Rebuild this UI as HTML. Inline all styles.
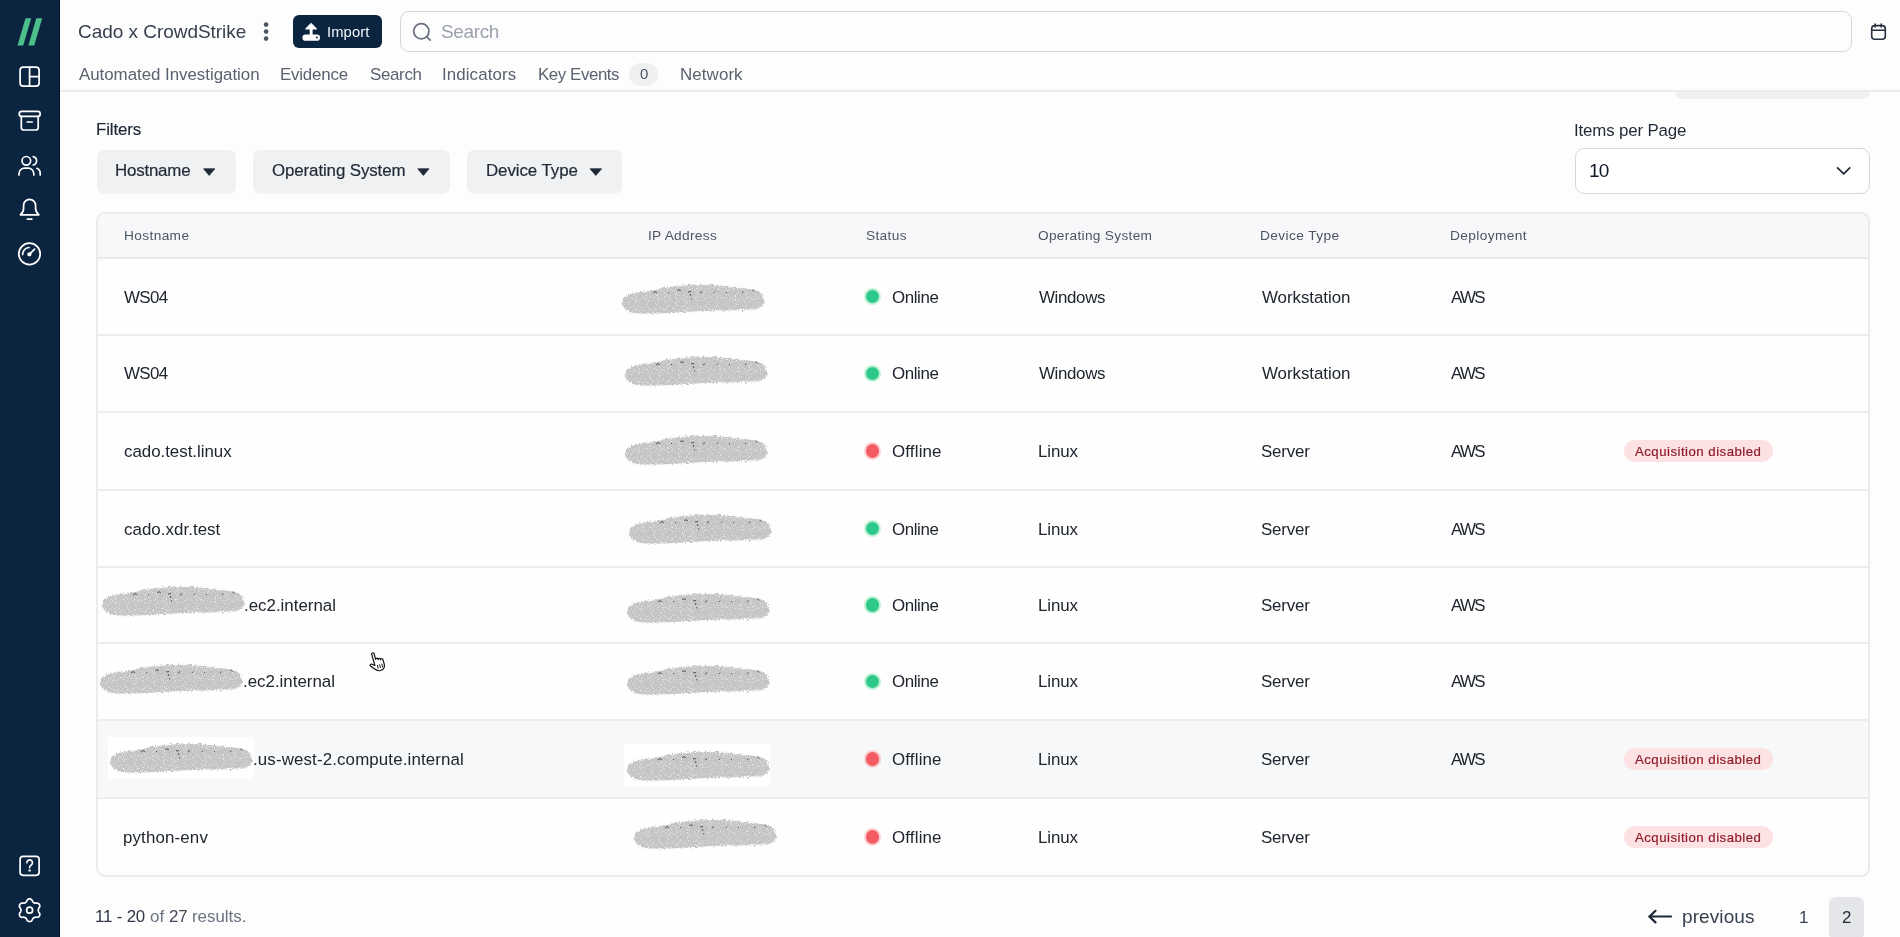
<!DOCTYPE html>
<html><head><meta charset="utf-8"><title>Cado</title>
<style>
html,body{margin:0;padding:0;}
body{width:1900px;height:937px;overflow:hidden;position:relative;background:#fdfdfd;font-family:"Liberation Sans",sans-serif;}
.t{position:absolute;white-space:pre;will-change:transform;}
.r{position:absolute;box-sizing:border-box;}
svg{position:absolute;overflow:visible;}
</style></head><body>

<div class="r" style="left:0px;top:0px;width:60px;height:937px;background:#0b2541;"></div>
<div class="r" style="left:59px;top:0px;width:1px;height:937px;background:#041529;"></div>
<svg style="left:0;top:0" width="61" height="60" viewBox="0 0 61 60"><path d="M25.5 18.3 L31.2 18.3 L23.2 45.5 L17.5 45.5 Z" fill="#4cbf8b"/><path d="M36.3 18.3 L42.2 18.3 L34.2 45.5 L28.4 45.5 Z" fill="#4cbf8b"/></svg>
<svg style="left:0;top:0" width="61" height="300"><g fill="none" stroke="#ffffff" stroke-width="1.7" stroke-linecap="round" stroke-linejoin="round"><rect x="20.1" y="67.1" width="19" height="19" rx="3.2"/><line x1="29.6" y1="67.1" x2="29.6" y2="86.1"/><line x1="29.6" y1="76.6" x2="39.1" y2="76.6"/><rect x="19.2" y="111.4" width="21" height="5.0" rx="2.5"/><path d="M21.3 116.4 V127.4 a2.6 2.6 0 0 0 2.6 2.6 H35.6 a2.6 2.6 0 0 0 2.6 -2.6 V116.4"/><line x1="27.2" y1="122" x2="32.2" y2="122"/><circle cx="26.3" cy="160.8" r="4.3"/><path d="M19 175 v-1.3 a5.6 5.6 0 0 1 5.6 -5.6 h3.6 a5.6 5.6 0 0 1 5.6 5.6 v1.3"/><path d="M33.2 156.6 a4.3 4.3 0 0 1 0 8.4"/><path d="M36.9 168.3 a5.6 5.6 0 0 1 3.3 5.2 v1.5"/><path d="M20.3 214.8 H38.9 C37 213.2 35.6 211.5 35.6 208.5 V205.4 a6 6 0 0 0 -12 0 V208.5 C23.6 211.5 22.2 213.2 20.3 214.8 Z"/><line x1="27.4" y1="219.2" x2="31.8" y2="219.2"/><circle cx="29.5" cy="253.9" r="10.7"/><path d="M22.6 254.6 A6.9 6.9 0 0 1 29.0 247.5"/><line x1="29.4" y1="254.3" x2="34.6" y2="249.1"/><circle cx="29.4" cy="254.3" r="1.3" fill="#ffffff"/></g></svg>
<svg style="left:0;top:840px" width="61" height="97"><g fill="none" stroke="#ffffff" stroke-width="1.7" stroke-linecap="round" stroke-linejoin="round"><rect x="20.1" y="16.3" width="19" height="19" rx="3"/><path d="M26.9 22.6 a2.8 2.8 0 1 1 4.3 2.4 c-1 .6 -1.6 1.1 -1.6 2.4"/><circle cx="29.6" cy="30.5" r="0.4" fill="#ffffff"/><path d="M29.60 58.85 L30.19 58.91 L30.77 59.10 L31.31 59.40 L31.80 59.84 L32.19 60.54 L32.51 61.25 L32.85 61.73 L33.19 62.13 L33.55 62.45 L33.92 62.71 L34.34 62.91 L34.79 63.05 L35.31 63.15 L35.89 63.21 L36.67 63.13 L37.47 63.11 L38.09 63.32 L38.63 63.64 L39.08 64.04 L39.43 64.53 L39.67 65.07 L39.80 65.66 L39.80 66.28 L39.67 66.93 L39.26 67.61 L38.80 68.24 L38.56 68.78 L38.39 69.28 L38.28 69.74 L38.25 70.20 L38.28 70.66 L38.39 71.12 L38.56 71.62 L38.80 72.16 L39.26 72.79 L39.67 73.47 L39.80 74.12 L39.80 74.74 L39.67 75.33 L39.43 75.88 L39.08 76.36 L38.63 76.76 L38.09 77.08 L37.47 77.29 L36.67 77.27 L35.89 77.19 L35.31 77.25 L34.79 77.35 L34.34 77.49 L33.92 77.69 L33.55 77.95 L33.19 78.27 L32.85 78.67 L32.51 79.15 L32.19 79.86 L31.80 80.56 L31.31 81.00 L30.77 81.30 L30.19 81.49 L29.60 81.55 L29.01 81.49 L28.43 81.30 L27.89 81.00 L27.40 80.56 L27.01 79.86 L26.69 79.15 L26.35 78.67 L26.01 78.27 L25.65 77.95 L25.28 77.69 L24.86 77.49 L24.41 77.35 L23.89 77.25 L23.31 77.19 L22.53 77.27 L21.73 77.29 L21.11 77.08 L20.57 76.76 L20.12 76.36 L19.77 75.88 L19.53 75.33 L19.40 74.74 L19.40 74.12 L19.53 73.47 L19.94 72.79 L20.40 72.16 L20.64 71.62 L20.81 71.12 L20.92 70.66 L20.95 70.20 L20.92 69.74 L20.81 69.28 L20.64 68.78 L20.40 68.24 L19.94 67.61 L19.53 66.93 L19.40 66.28 L19.40 65.66 L19.53 65.07 L19.77 64.53 L20.12 64.04 L20.57 63.64 L21.11 63.32 L21.73 63.11 L22.53 63.13 L23.31 63.21 L23.89 63.15 L24.41 63.05 L24.86 62.91 L25.28 62.71 L25.65 62.45 L26.01 62.13 L26.35 61.73 L26.69 61.25 L27.01 60.54 L27.40 59.84 L27.89 59.40 L28.43 59.10 L29.01 58.91 Z"/><circle cx="29.6" cy="70.2" r="3.0"/></g></svg>
<div class="r" style="left:60px;top:0px;width:1840px;height:91px;background:#fdfdfd;"></div>
<div class="r" style="left:60px;top:90px;width:1840px;height:2px;background:#ececef;"></div>
<div class="t" style="left:77.80px;top:20px;font-size:19.0px;line-height:24px;color:#384150;letter-spacing:-0.037px;">Cado x CrowdStrike</div>
<svg style="left:0;top:0" width="300" height="60"><g fill="#4b5563"><circle cx="266.1" cy="24.6" r="2.3"/><circle cx="266.1" cy="31.6" r="2.3"/><circle cx="266.1" cy="38.6" r="2.3"/></g></svg>
<div class="r" style="left:293px;top:15px;width:89px;height:33px;background:#0b2541;border-radius:6px;"></div>
<svg style="left:0;top:0" width="400" height="60"><path d="M311.1 23.6 L316.3 28.9 L305.9 28.9 Z" fill="#fff" stroke="#fff" stroke-width="1.3" stroke-linejoin="round"/><rect x="309.7" y="27.5" width="2.9" height="8.5" fill="#fff"/><rect x="302.4" y="34.6" width="17.6" height="6.2" rx="3.1" fill="#fff"/><circle cx="316.9" cy="37.5" r="0.95" fill="#0b2541"/></svg>
<div class="t" style="left:327.32px;top:20px;font-size:14.8px;line-height:24px;color:#f4f6f8;letter-spacing:0.085px;">Import</div>
<div class="r" style="left:400px;top:11px;width:1452px;height:41px;background:#fdfdfe;border:1.5px solid #d4d7dd;border-radius:9px;"></div>
<svg style="left:0;top:0" width="460" height="60"><g fill="none" stroke="#6b7280" stroke-width="1.8" stroke-linecap="round"><circle cx="421.3" cy="31.3" r="7.6"/><line x1="426.9" y1="36.9" x2="430.2" y2="40.2"/></g></svg>
<div class="t" style="left:441.23px;top:20px;font-size:19.0px;line-height:24px;color:#9aa1ac;letter-spacing:-0.365px;">Search</div>
<svg style="left:0;top:0" width="1900" height="60"><g fill="none" stroke="#263040" stroke-width="1.6" stroke-linecap="round" stroke-linejoin="round"><rect x="1871.7" y="25.6" width="13.6" height="13.6" rx="3"/><line x1="1871.7" y1="30.3" x2="1885.3" y2="30.3"/><line x1="1875.2" y1="24" x2="1875.2" y2="27"/><line x1="1881.2" y1="24" x2="1881.2" y2="27"/></g></svg>
<div class="t" style="left:78.80px;top:63px;font-size:16.9px;line-height:24px;color:#5a6270;letter-spacing:-0.031px;">Automated Investigation</div>
<div class="t" style="left:279.62px;top:63px;font-size:16.9px;line-height:24px;color:#5a6270;letter-spacing:-0.207px;">Evidence</div>
<div class="t" style="left:369.75px;top:63px;font-size:16.9px;line-height:24px;color:#5a6270;letter-spacing:-0.325px;">Search</div>
<div class="t" style="left:442.30px;top:63px;font-size:16.9px;line-height:24px;color:#5a6270;letter-spacing:0.097px;">Indicators</div>
<div class="t" style="left:537.62px;top:63px;font-size:16.9px;line-height:24px;color:#5a6270;letter-spacing:-0.431px;">Key Events</div>
<div class="r" style="left:628.8px;top:62.5px;width:29.700000000000045px;height:23.0px;background:#eff0f2;border-radius:11.5px;"></div>
<div class="t" style="left:639.77px;top:62px;font-size:15.0px;line-height:24px;color:#4b5563;">0</div>
<div class="t" style="left:680.33px;top:63px;font-size:16.9px;line-height:24px;color:#5a6270;letter-spacing:0.100px;">Network</div>
<div class="r" style="left:1675px;top:92px;width:195px;height:7px;background:#eff0f2;border-radius:0 0 8px 8px;"></div>
<div class="t" style="left:95.72px;top:118px;font-size:16.9px;line-height:24px;color:#1f2937;letter-spacing:-0.117px;-webkit-text-stroke:0.2px #1f2937;">Filters</div>
<div class="r" style="left:96.5px;top:149.5px;width:139.0px;height:43.5px;background:#f0f1f3;border-radius:7px;box-shadow:0 1px 1px rgba(0,0,0,0.03);"></div>
<div class="r" style="left:252.5px;top:149.5px;width:197.0px;height:43.5px;background:#f0f1f3;border-radius:7px;box-shadow:0 1px 1px rgba(0,0,0,0.03);"></div>
<div class="r" style="left:467px;top:149.5px;width:154.79999999999995px;height:43.5px;background:#f0f1f3;border-radius:7px;box-shadow:0 1px 1px rgba(0,0,0,0.03);"></div>
<div class="t" style="left:114.62px;top:159px;font-size:16.9px;line-height:24px;color:#1f2937;letter-spacing:-0.207px;-webkit-text-stroke:0.2px #1f2937;">Hostname</div>
<div class="t" style="left:271.65px;top:159px;font-size:16.9px;line-height:24px;color:#1f2937;letter-spacing:-0.110px;-webkit-text-stroke:0.2px #1f2937;">Operating System</div>
<div class="t" style="left:485.73px;top:159px;font-size:16.9px;line-height:24px;color:#1f2937;letter-spacing:-0.078px;-webkit-text-stroke:0.2px #1f2937;">Device Type</div>
<svg style="left:0;top:0" width="1" height="1"><path d="M203.6 168.8 L214.8 168.8 L209.2 175.4 Z" fill="#1f2937" stroke="#1f2937" stroke-width="0.8" stroke-linejoin="round"/></svg>
<svg style="left:0;top:0" width="1" height="1"><path d="M417.8 168.8 L429.0 168.8 L423.4 175.4 Z" fill="#1f2937" stroke="#1f2937" stroke-width="0.8" stroke-linejoin="round"/></svg>
<svg style="left:0;top:0" width="1" height="1"><path d="M590.0 168.8 L601.6 168.8 L595.8 175.4 Z" fill="#1f2937" stroke="#1f2937" stroke-width="0.8" stroke-linejoin="round"/></svg>
<div class="t" style="left:1574.20px;top:119px;font-size:16.9px;line-height:24px;color:#1f2937;letter-spacing:-0.163px;">Items per Page</div>
<div class="r" style="left:1575px;top:147.5px;width:294.5px;height:46.5px;background:#ffffff;border:1.5px solid #d4d7dd;border-radius:9px;"></div>
<div class="t" style="left:1589.03px;top:159px;font-size:19.0px;line-height:24px;color:#111827;letter-spacing:-0.825px;">10</div>
<svg style="left:0;top:0" width="1" height="1"><path d="M1837.6 167.8 L1843.7 173.9 L1849.8 167.8" fill="none" stroke="#1f2937" stroke-width="1.7" stroke-linecap="round" stroke-linejoin="round"/></svg>
<div class="r" style="left:96px;top:212px;width:1774px;height:665px;background:#fefefe;border:2px solid #ebebee;border-radius:9px;overflow:hidden;"></div>
<div class="r" style="left:98px;top:214px;width:1770px;height:44px;background:#f8f8fa;border-radius:7px 7px 0 0;"></div>
<div class="r" style="left:98px;top:720px;width:1770px;height:78px;background:#f7f8fa;"></div>
<div class="r" style="left:98px;top:334px;width:1770px;height:2px;background:#ededef;"></div>
<div class="r" style="left:98px;top:411px;width:1770px;height:2px;background:#ededef;"></div>
<div class="r" style="left:98px;top:489px;width:1770px;height:2px;background:#ededef;"></div>
<div class="r" style="left:98px;top:566px;width:1770px;height:2px;background:#ededef;"></div>
<div class="r" style="left:98px;top:642px;width:1770px;height:2px;background:#ededef;"></div>
<div class="r" style="left:98px;top:719px;width:1770px;height:2px;background:#ededef;"></div>
<div class="r" style="left:98px;top:797px;width:1770px;height:2px;background:#ededef;"></div>
<div class="r" style="left:98px;top:257px;width:1770px;height:2px;background:#e9eaed;"></div>
<div class="t" style="left:123.58px;top:224px;font-size:13.7px;line-height:24px;color:#4b5563;letter-spacing:0.375px;">Hostname</div>
<div class="t" style="left:648.15px;top:224px;font-size:13.7px;line-height:24px;color:#4b5563;letter-spacing:0.311px;">IP Address</div>
<div class="t" style="left:865.58px;top:224px;font-size:13.7px;line-height:24px;color:#4b5563;letter-spacing:0.345px;">Status</div>
<div class="t" style="left:1038.08px;top:224px;font-size:13.7px;line-height:24px;color:#4b5563;letter-spacing:0.293px;">Operating System</div>
<div class="t" style="left:1260.47px;top:224px;font-size:13.7px;line-height:24px;color:#4b5563;letter-spacing:0.397px;">Device Type</div>
<div class="t" style="left:1449.88px;top:224px;font-size:13.7px;line-height:24px;color:#4b5563;letter-spacing:0.386px;">Deployment</div>
<svg width="0" height="0" style="position:absolute"><defs><filter id="nz" x="-8%" y="-25%" width="116%" height="150%"><feTurbulence type="fractalNoise" baseFrequency="0.6" numOctaves="2" seed="5" result="n"/><feDisplacementMap in="SourceGraphic" in2="n" scale="5" xChannelSelector="R" yChannelSelector="G" result="d"/><feTurbulence type="fractalNoise" baseFrequency="1.1" numOctaves="1" seed="11" result="n2"/><feColorMatrix in="n2" type="matrix" values="0 0 0 0 1  0 0 0 0 1  0 0 0 0 1  0 0 0 -3.2 2.75" result="m"/><feComposite in="d" in2="m" operator="in"/></filter></defs></svg>
<div class="t" style="left:124.47px;top:286px;font-size:16.9px;line-height:24px;color:#20262f;letter-spacing:-0.625px;">WS04</div>
<svg style="left:622.3px;top:284.2px" width="143" height="30" viewBox="0 0 143 30"><path d="M2 13 C8 9 20 8 30 6 C45 3 60 1 75 0.5 C88 0 100 2 112 3 C122 4 132 5 138 8 C142 11 143 17 141 21 C139 25 128 26 118 26 C100 26.5 80 27 62 28 C45 29.5 25 30 12 29 C5 28 0 24 0.5 19 C0.5 16 1 14 2 13 Z" fill="#c4c4c4" filter="url(#nz)"/><g fill="none" stroke="#2a2f38" stroke-width="0.9" opacity="0.85"><path d="M31 9 l2 -1.5 l2 1.5"/><path d="M46 8 l1 1"/><path d="M55 7 c1 -1.5 3 -1.5 4 0"/><path d="M66 8 l3 -0.5 M68 10 l1 2 M69 14 l1 1.5"/><path d="M78 9 l2 -1.5"/><path d="M92 9 l1 -1.5"/><path d="M104 8 l1 1"/><path d="M120 9 l1.5 -1.5"/><path d="M130 6 c1 0 2 0.5 2.5 1.5"/></g></svg>
<div class="r" style="left:863.8px;top:287.9px;width:17.2px;height:17.2px;border-radius:50%;background:rgba(74,222,128,0.35);"></div>
<div class="r" style="left:865.8px;top:289.9px;width:13.2px;height:13.2px;border-radius:50%;background:#2fc88b;"></div>
<div class="t" style="left:892.35px;top:286px;font-size:16.9px;line-height:24px;color:#20262f;letter-spacing:-0.410px;">Online</div>
<div class="t" style="left:1038.78px;top:286px;font-size:16.9px;line-height:24px;color:#20262f;letter-spacing:-0.342px;">Windows</div>
<div class="t" style="left:1261.88px;top:286px;font-size:16.9px;line-height:24px;color:#20262f;letter-spacing:-0.050px;">Workstation</div>
<div class="t" style="left:1451.30px;top:286px;font-size:16.9px;line-height:24px;color:#20262f;letter-spacing:-1.700px;">AWS</div>
<div class="t" style="left:124.47px;top:362px;font-size:16.9px;line-height:24px;color:#20262f;letter-spacing:-0.625px;">WS04</div>
<svg style="left:625.4px;top:356.0px" width="143" height="30" viewBox="0 0 143 30"><path d="M2 13 C8 9 20 8 30 6 C45 3 60 1 75 0.5 C88 0 100 2 112 3 C122 4 132 5 138 8 C142 11 143 17 141 21 C139 25 128 26 118 26 C100 26.5 80 27 62 28 C45 29.5 25 30 12 29 C5 28 0 24 0.5 19 C0.5 16 1 14 2 13 Z" fill="#c4c4c4" filter="url(#nz)"/><g fill="none" stroke="#2a2f38" stroke-width="0.9" opacity="0.85"><path d="M31 9 l2 -1.5 l2 1.5"/><path d="M46 8 l1 1"/><path d="M55 7 c1 -1.5 3 -1.5 4 0"/><path d="M66 8 l3 -0.5 M68 10 l1 2 M69 14 l1 1.5"/><path d="M78 9 l2 -1.5"/><path d="M92 9 l1 -1.5"/><path d="M104 8 l1 1"/><path d="M120 9 l1.5 -1.5"/><path d="M130 6 c1 0 2 0.5 2.5 1.5"/></g></svg>
<div class="r" style="left:863.8px;top:364.9px;width:17.2px;height:17.2px;border-radius:50%;background:rgba(74,222,128,0.35);"></div>
<div class="r" style="left:865.8px;top:366.9px;width:13.2px;height:13.2px;border-radius:50%;background:#2fc88b;"></div>
<div class="t" style="left:892.35px;top:362px;font-size:16.9px;line-height:24px;color:#20262f;letter-spacing:-0.410px;">Online</div>
<div class="t" style="left:1038.78px;top:362px;font-size:16.9px;line-height:24px;color:#20262f;letter-spacing:-0.342px;">Windows</div>
<div class="t" style="left:1261.88px;top:362px;font-size:16.9px;line-height:24px;color:#20262f;letter-spacing:-0.050px;">Workstation</div>
<div class="t" style="left:1451.30px;top:362px;font-size:16.9px;line-height:24px;color:#20262f;letter-spacing:-1.700px;">AWS</div>
<div class="t" style="left:123.85px;top:440px;font-size:16.9px;line-height:24px;color:#20262f;letter-spacing:-0.027px;">cado.test.linux</div>
<svg style="left:625.4px;top:435.0px" width="143" height="30" viewBox="0 0 143 30"><path d="M2 13 C8 9 20 8 30 6 C45 3 60 1 75 0.5 C88 0 100 2 112 3 C122 4 132 5 138 8 C142 11 143 17 141 21 C139 25 128 26 118 26 C100 26.5 80 27 62 28 C45 29.5 25 30 12 29 C5 28 0 24 0.5 19 C0.5 16 1 14 2 13 Z" fill="#c4c4c4" filter="url(#nz)"/><g fill="none" stroke="#2a2f38" stroke-width="0.9" opacity="0.85"><path d="M31 9 l2 -1.5 l2 1.5"/><path d="M46 8 l1 1"/><path d="M55 7 c1 -1.5 3 -1.5 4 0"/><path d="M66 8 l3 -0.5 M68 10 l1 2 M69 14 l1 1.5"/><path d="M78 9 l2 -1.5"/><path d="M92 9 l1 -1.5"/><path d="M104 8 l1 1"/><path d="M120 9 l1.5 -1.5"/><path d="M130 6 c1 0 2 0.5 2.5 1.5"/></g></svg>
<div class="r" style="left:863.8px;top:442.4px;width:17.2px;height:17.2px;border-radius:50%;background:rgba(248,113,113,0.3);"></div>
<div class="r" style="left:865.8px;top:444.4px;width:13.2px;height:13.2px;border-radius:50%;background:#f25c62;"></div>
<div class="t" style="left:892.35px;top:440px;font-size:16.9px;line-height:24px;color:#20262f;letter-spacing:0.167px;">Offline</div>
<div class="t" style="left:1037.53px;top:440px;font-size:16.9px;line-height:24px;color:#20262f;letter-spacing:-0.113px;">Linux</div>
<div class="t" style="left:1261.25px;top:440px;font-size:16.9px;line-height:24px;color:#20262f;letter-spacing:-0.170px;">Server</div>
<div class="t" style="left:1451.30px;top:440px;font-size:16.9px;line-height:24px;color:#20262f;letter-spacing:-1.700px;">AWS</div>
<div class="r" style="left:1624.2px;top:440.0px;width:148.79999999999995px;height:22.0px;background:#fde2e4;border-radius:11px;"></div>
<div class="t" style="left:1635.10px;top:440px;font-size:13.2px;line-height:24px;color:#8e1b2a;letter-spacing:0.492px;-webkit-text-stroke:0.2px #8e1b2a;">Acquisition disabled</div>
<div class="t" style="left:123.85px;top:518px;font-size:16.9px;line-height:24px;color:#20262f;letter-spacing:0.044px;">cado.xdr.test</div>
<svg style="left:629.3px;top:513.7px" width="143" height="30" viewBox="0 0 143 30"><path d="M2 13 C8 9 20 8 30 6 C45 3 60 1 75 0.5 C88 0 100 2 112 3 C122 4 132 5 138 8 C142 11 143 17 141 21 C139 25 128 26 118 26 C100 26.5 80 27 62 28 C45 29.5 25 30 12 29 C5 28 0 24 0.5 19 C0.5 16 1 14 2 13 Z" fill="#c4c4c4" filter="url(#nz)"/><g fill="none" stroke="#2a2f38" stroke-width="0.9" opacity="0.85"><path d="M31 9 l2 -1.5 l2 1.5"/><path d="M46 8 l1 1"/><path d="M55 7 c1 -1.5 3 -1.5 4 0"/><path d="M66 8 l3 -0.5 M68 10 l1 2 M69 14 l1 1.5"/><path d="M78 9 l2 -1.5"/><path d="M92 9 l1 -1.5"/><path d="M104 8 l1 1"/><path d="M120 9 l1.5 -1.5"/><path d="M130 6 c1 0 2 0.5 2.5 1.5"/></g></svg>
<div class="r" style="left:863.8px;top:519.9px;width:17.2px;height:17.2px;border-radius:50%;background:rgba(74,222,128,0.35);"></div>
<div class="r" style="left:865.8px;top:521.9px;width:13.2px;height:13.2px;border-radius:50%;background:#2fc88b;"></div>
<div class="t" style="left:892.35px;top:518px;font-size:16.9px;line-height:24px;color:#20262f;letter-spacing:-0.410px;">Online</div>
<div class="t" style="left:1037.53px;top:518px;font-size:16.9px;line-height:24px;color:#20262f;letter-spacing:-0.113px;">Linux</div>
<div class="t" style="left:1261.25px;top:518px;font-size:16.9px;line-height:24px;color:#20262f;letter-spacing:-0.170px;">Server</div>
<div class="t" style="left:1451.30px;top:518px;font-size:16.9px;line-height:24px;color:#20262f;letter-spacing:-1.700px;">AWS</div>
<svg style="left:101.6px;top:585.6px" width="143" height="30" viewBox="0 0 143 30"><path d="M2 13 C8 9 20 8 30 6 C45 3 60 1 75 0.5 C88 0 100 2 112 3 C122 4 132 5 138 8 C142 11 143 17 141 21 C139 25 128 26 118 26 C100 26.5 80 27 62 28 C45 29.5 25 30 12 29 C5 28 0 24 0.5 19 C0.5 16 1 14 2 13 Z" fill="#c4c4c4" filter="url(#nz)"/><g fill="none" stroke="#2a2f38" stroke-width="0.9" opacity="0.85"><path d="M31 9 l2 -1.5 l2 1.5"/><path d="M46 8 l1 1"/><path d="M55 7 c1 -1.5 3 -1.5 4 0"/><path d="M66 8 l3 -0.5 M68 10 l1 2 M69 14 l1 1.5"/><path d="M78 9 l2 -1.5"/><path d="M92 9 l1 -1.5"/><path d="M104 8 l1 1"/><path d="M120 9 l1.5 -1.5"/><path d="M130 6 c1 0 2 0.5 2.5 1.5"/></g></svg>
<div class="t" style="left:244.40px;top:594px;font-size:16.9px;line-height:24px;color:#20262f;">.ec2.internal</div>
<svg style="left:626.9px;top:593.4px" width="143" height="30" viewBox="0 0 143 30"><path d="M2 13 C8 9 20 8 30 6 C45 3 60 1 75 0.5 C88 0 100 2 112 3 C122 4 132 5 138 8 C142 11 143 17 141 21 C139 25 128 26 118 26 C100 26.5 80 27 62 28 C45 29.5 25 30 12 29 C5 28 0 24 0.5 19 C0.5 16 1 14 2 13 Z" fill="#c4c4c4" filter="url(#nz)"/><g fill="none" stroke="#2a2f38" stroke-width="0.9" opacity="0.85"><path d="M31 9 l2 -1.5 l2 1.5"/><path d="M46 8 l1 1"/><path d="M55 7 c1 -1.5 3 -1.5 4 0"/><path d="M66 8 l3 -0.5 M68 10 l1 2 M69 14 l1 1.5"/><path d="M78 9 l2 -1.5"/><path d="M92 9 l1 -1.5"/><path d="M104 8 l1 1"/><path d="M120 9 l1.5 -1.5"/><path d="M130 6 c1 0 2 0.5 2.5 1.5"/></g></svg>
<div class="r" style="left:863.8px;top:596.4px;width:17.2px;height:17.2px;border-radius:50%;background:rgba(74,222,128,0.35);"></div>
<div class="r" style="left:865.8px;top:598.4px;width:13.2px;height:13.2px;border-radius:50%;background:#2fc88b;"></div>
<div class="t" style="left:892.35px;top:594px;font-size:16.9px;line-height:24px;color:#20262f;letter-spacing:-0.410px;">Online</div>
<div class="t" style="left:1037.53px;top:594px;font-size:16.9px;line-height:24px;color:#20262f;letter-spacing:-0.113px;">Linux</div>
<div class="t" style="left:1261.25px;top:594px;font-size:16.9px;line-height:24px;color:#20262f;letter-spacing:-0.170px;">Server</div>
<div class="t" style="left:1451.30px;top:594px;font-size:16.9px;line-height:24px;color:#20262f;letter-spacing:-1.700px;">AWS</div>
<svg style="left:100.2px;top:663.8px" width="143" height="30" viewBox="0 0 143 30"><path d="M2 13 C8 9 20 8 30 6 C45 3 60 1 75 0.5 C88 0 100 2 112 3 C122 4 132 5 138 8 C142 11 143 17 141 21 C139 25 128 26 118 26 C100 26.5 80 27 62 28 C45 29.5 25 30 12 29 C5 28 0 24 0.5 19 C0.5 16 1 14 2 13 Z" fill="#c4c4c4" filter="url(#nz)"/><g fill="none" stroke="#2a2f38" stroke-width="0.9" opacity="0.85"><path d="M31 9 l2 -1.5 l2 1.5"/><path d="M46 8 l1 1"/><path d="M55 7 c1 -1.5 3 -1.5 4 0"/><path d="M66 8 l3 -0.5 M68 10 l1 2 M69 14 l1 1.5"/><path d="M78 9 l2 -1.5"/><path d="M92 9 l1 -1.5"/><path d="M104 8 l1 1"/><path d="M120 9 l1.5 -1.5"/><path d="M130 6 c1 0 2 0.5 2.5 1.5"/></g></svg>
<div class="t" style="left:242.50px;top:670px;font-size:16.9px;line-height:24px;color:#20262f;">.ec2.internal</div>
<svg style="left:627.0px;top:665.2px" width="143" height="30" viewBox="0 0 143 30"><path d="M2 13 C8 9 20 8 30 6 C45 3 60 1 75 0.5 C88 0 100 2 112 3 C122 4 132 5 138 8 C142 11 143 17 141 21 C139 25 128 26 118 26 C100 26.5 80 27 62 28 C45 29.5 25 30 12 29 C5 28 0 24 0.5 19 C0.5 16 1 14 2 13 Z" fill="#c4c4c4" filter="url(#nz)"/><g fill="none" stroke="#2a2f38" stroke-width="0.9" opacity="0.85"><path d="M31 9 l2 -1.5 l2 1.5"/><path d="M46 8 l1 1"/><path d="M55 7 c1 -1.5 3 -1.5 4 0"/><path d="M66 8 l3 -0.5 M68 10 l1 2 M69 14 l1 1.5"/><path d="M78 9 l2 -1.5"/><path d="M92 9 l1 -1.5"/><path d="M104 8 l1 1"/><path d="M120 9 l1.5 -1.5"/><path d="M130 6 c1 0 2 0.5 2.5 1.5"/></g></svg>
<div class="r" style="left:863.8px;top:672.9px;width:17.2px;height:17.2px;border-radius:50%;background:rgba(74,222,128,0.35);"></div>
<div class="r" style="left:865.8px;top:674.9px;width:13.2px;height:13.2px;border-radius:50%;background:#2fc88b;"></div>
<div class="t" style="left:892.35px;top:670px;font-size:16.9px;line-height:24px;color:#20262f;letter-spacing:-0.410px;">Online</div>
<div class="t" style="left:1037.53px;top:670px;font-size:16.9px;line-height:24px;color:#20262f;letter-spacing:-0.113px;">Linux</div>
<div class="t" style="left:1261.25px;top:670px;font-size:16.9px;line-height:24px;color:#20262f;letter-spacing:-0.170px;">Server</div>
<div class="t" style="left:1451.30px;top:670px;font-size:16.9px;line-height:24px;color:#20262f;letter-spacing:-1.700px;">AWS</div>
<div class="r" style="left:107.9px;top:737px;width:146.1px;height:42px;background:#ffffff;"></div>
<svg style="left:110.3px;top:743.0px" width="143" height="30" viewBox="0 0 143 30"><path d="M2 13 C8 9 20 8 30 6 C45 3 60 1 75 0.5 C88 0 100 2 112 3 C122 4 132 5 138 8 C142 11 143 17 141 21 C139 25 128 26 118 26 C100 26.5 80 27 62 28 C45 29.5 25 30 12 29 C5 28 0 24 0.5 19 C0.5 16 1 14 2 13 Z" fill="#c4c4c4" filter="url(#nz)"/><g fill="none" stroke="#2a2f38" stroke-width="0.9" opacity="0.85"><path d="M31 9 l2 -1.5 l2 1.5"/><path d="M46 8 l1 1"/><path d="M55 7 c1 -1.5 3 -1.5 4 0"/><path d="M66 8 l3 -0.5 M68 10 l1 2 M69 14 l1 1.5"/><path d="M78 9 l2 -1.5"/><path d="M92 9 l1 -1.5"/><path d="M104 8 l1 1"/><path d="M120 9 l1.5 -1.5"/><path d="M130 6 c1 0 2 0.5 2.5 1.5"/></g></svg>
<div class="t" style="left:253.30px;top:748px;font-size:16.9px;line-height:24px;color:#20262f;letter-spacing:0.130px;">.us-west-2.compute.internal</div>
<div class="r" style="left:623.9px;top:743.8px;width:146.5px;height:42.40000000000009px;background:#ffffff;"></div>
<svg style="left:627.0px;top:750.6px" width="143" height="30" viewBox="0 0 143 30"><path d="M2 13 C8 9 20 8 30 6 C45 3 60 1 75 0.5 C88 0 100 2 112 3 C122 4 132 5 138 8 C142 11 143 17 141 21 C139 25 128 26 118 26 C100 26.5 80 27 62 28 C45 29.5 25 30 12 29 C5 28 0 24 0.5 19 C0.5 16 1 14 2 13 Z" fill="#c4c4c4" filter="url(#nz)"/><g fill="none" stroke="#2a2f38" stroke-width="0.9" opacity="0.85"><path d="M31 9 l2 -1.5 l2 1.5"/><path d="M46 8 l1 1"/><path d="M55 7 c1 -1.5 3 -1.5 4 0"/><path d="M66 8 l3 -0.5 M68 10 l1 2 M69 14 l1 1.5"/><path d="M78 9 l2 -1.5"/><path d="M92 9 l1 -1.5"/><path d="M104 8 l1 1"/><path d="M120 9 l1.5 -1.5"/><path d="M130 6 c1 0 2 0.5 2.5 1.5"/></g></svg>
<div class="r" style="left:863.8px;top:750.4px;width:17.2px;height:17.2px;border-radius:50%;background:rgba(248,113,113,0.3);"></div>
<div class="r" style="left:865.8px;top:752.4px;width:13.2px;height:13.2px;border-radius:50%;background:#f25c62;"></div>
<div class="t" style="left:892.35px;top:748px;font-size:16.9px;line-height:24px;color:#20262f;letter-spacing:0.167px;">Offline</div>
<div class="t" style="left:1037.53px;top:748px;font-size:16.9px;line-height:24px;color:#20262f;letter-spacing:-0.113px;">Linux</div>
<div class="t" style="left:1261.25px;top:748px;font-size:16.9px;line-height:24px;color:#20262f;letter-spacing:-0.170px;">Server</div>
<div class="t" style="left:1451.30px;top:748px;font-size:16.9px;line-height:24px;color:#20262f;letter-spacing:-1.700px;">AWS</div>
<div class="r" style="left:1624.2px;top:748.0px;width:148.79999999999995px;height:22.0px;background:#fde2e4;border-radius:11px;"></div>
<div class="t" style="left:1635.10px;top:748px;font-size:13.2px;line-height:24px;color:#8e1b2a;letter-spacing:0.492px;-webkit-text-stroke:0.2px #8e1b2a;">Acquisition disabled</div>
<div class="t" style="left:123.47px;top:826px;font-size:16.9px;line-height:24px;color:#20262f;letter-spacing:0.139px;">python-env</div>
<svg style="left:634.4px;top:819.0px" width="143" height="30" viewBox="0 0 143 30"><path d="M2 13 C8 9 20 8 30 6 C45 3 60 1 75 0.5 C88 0 100 2 112 3 C122 4 132 5 138 8 C142 11 143 17 141 21 C139 25 128 26 118 26 C100 26.5 80 27 62 28 C45 29.5 25 30 12 29 C5 28 0 24 0.5 19 C0.5 16 1 14 2 13 Z" fill="#c4c4c4" filter="url(#nz)"/><g fill="none" stroke="#2a2f38" stroke-width="0.9" opacity="0.85"><path d="M31 9 l2 -1.5 l2 1.5"/><path d="M46 8 l1 1"/><path d="M55 7 c1 -1.5 3 -1.5 4 0"/><path d="M66 8 l3 -0.5 M68 10 l1 2 M69 14 l1 1.5"/><path d="M78 9 l2 -1.5"/><path d="M92 9 l1 -1.5"/><path d="M104 8 l1 1"/><path d="M120 9 l1.5 -1.5"/><path d="M130 6 c1 0 2 0.5 2.5 1.5"/></g></svg>
<div class="r" style="left:863.8px;top:828.4px;width:17.2px;height:17.2px;border-radius:50%;background:rgba(248,113,113,0.3);"></div>
<div class="r" style="left:865.8px;top:830.4px;width:13.2px;height:13.2px;border-radius:50%;background:#f25c62;"></div>
<div class="t" style="left:892.35px;top:826px;font-size:16.9px;line-height:24px;color:#20262f;letter-spacing:0.167px;">Offline</div>
<div class="t" style="left:1037.53px;top:826px;font-size:16.9px;line-height:24px;color:#20262f;letter-spacing:-0.113px;">Linux</div>
<div class="t" style="left:1261.25px;top:826px;font-size:16.9px;line-height:24px;color:#20262f;letter-spacing:-0.170px;">Server</div>
<div class="r" style="left:1624.2px;top:826.0px;width:148.79999999999995px;height:22.0px;background:#fde2e4;border-radius:11px;"></div>
<div class="t" style="left:1635.10px;top:826px;font-size:13.2px;line-height:24px;color:#8e1b2a;letter-spacing:0.492px;-webkit-text-stroke:0.2px #8e1b2a;">Acquisition disabled</div>
<svg style="left:367.5px;top:649.5px;transform:rotate(-16deg);transform-origin:50% 60%" width="22" height="23" viewBox="0 0 20 24" preserveAspectRatio="none"><path d="M6 2.5 c0-1.2 2.2-1.2 2.2 0 V9 c0-1.2 2.1-1.2 2.1 0 v1 c0-1.2 2.1-1.2 2.1 0 v1 c0-1.2 2.1-1.2 2.1 0 v5 c0 3-1.6 5.5-4.8 5.5 H9.5 c-2 0-3-1-4-2.4 L2 14.2 c-0.8-1.2 0.8-2.4 1.8-1.4 L6 15 Z" fill="#fff" stroke="#111" stroke-width="1.1" stroke-linejoin="round"/><path d="M10.3 15 v4 M12.4 15 v4 M8.2 15 v4" stroke="#111" stroke-width="0.9"/></svg>
<div class="t" style="left:95.45px;top:905px;font-size:16.9px;line-height:24px;color:#2f3744;letter-spacing:-0.179px;">11 - 20</div>
<div class="t" style="left:150.05px;top:905px;font-size:16.9px;line-height:24px;color:#6b7280;letter-spacing:0.025px;">of</div>
<div class="t" style="left:169.32px;top:905px;font-size:16.9px;line-height:24px;color:#434b58;letter-spacing:-0.200px;">27</div>
<div class="t" style="left:191.57px;top:905px;font-size:16.9px;line-height:24px;color:#6b7280;">results.</div>
<svg style="left:0;top:0" width="1" height="1"><g fill="none" stroke="#1f2937" stroke-width="2.2" stroke-linecap="round" stroke-linejoin="round"><line x1="1649.5" y1="916.5" x2="1671" y2="916.5"/><path d="M1655.5 910.8 L1649.5 916.6 L1655.5 922.4"/></g></svg>
<div class="t" style="left:1682.35px;top:905px;font-size:19.0px;line-height:24px;color:#374151;letter-spacing:0.100px;">previous</div>
<div class="t" style="left:1798.55px;top:906px;font-size:16.9px;line-height:24px;color:#374151;">1</div>
<div class="r" style="left:1828.8px;top:897px;width:35.700000000000045px;height:43px;background:#e4e6ea;border-radius:7px;"></div>
<div class="t" style="left:1841.83px;top:906px;font-size:16.9px;line-height:24px;color:#1f2937;">2</div>
</body></html>
